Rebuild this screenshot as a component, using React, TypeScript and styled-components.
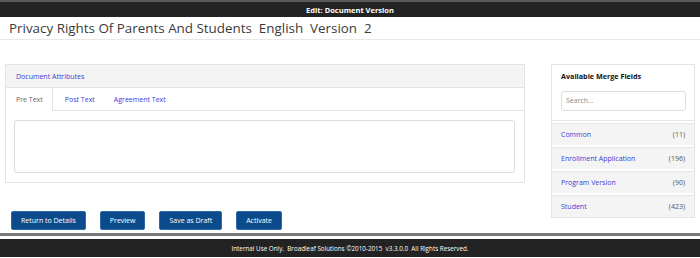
import React from 'react'
import styled, { createGlobalStyle } from 'styled-components'

interface MergeField {
  name: string,
  count: number,
}

interface TabProps {
  active?: boolean
}

const GlobalStyle = createGlobalStyle`
  body {
    margin: 0;
    background: #ffffff;
    font-family: 'Open Sans', 'Noto Sans', sans-serif;
    color: #333333;
  }
`

const TopBar = styled.div`
  height: 15px;
  border-top: 2px solid #5a5a5a;
  background: #232323;
  color: #ffffff;
  font-size: 7.5px;
  font-weight: 700;
  display: flex;
  align-items: center;
  justify-content: center;
`

const TitleRow = styled.div`
  height: 22px;
  padding: 0 9px;
  display: flex;
  align-items: center;
  border-bottom: 1px solid #e8e8e8;
  font-size: 13.4px;
  color: #3a3a3a;
`

const Main = styled.div`
  display: flex;
  align-items: flex-start;
  justify-content: space-between;
  padding: 24px 5px 3px 5px;
`

const LeftColumn = styled.div`
  width: 520px;
  display: flex;
  flex-direction: column;
`

const Panel = styled.div`
  border: 1px solid #e4e4e4;
  background: #ffffff;
`

const PanelHeader = styled.div`
  height: 22px;
  padding-left: 10px;
  display: flex;
  align-items: center;
  background: #f4f4f4;
  border-bottom: 1px solid #e4e4e4;
  font-size: 7px;
  color: #3b3bd6;
`

const Tabs = styled.div`
  height: 22px;
  display: flex;
  border-bottom: 1px solid #e4e4e4;
`

const Tab = styled.div<TabProps>`
  padding: 0 9px 0 10px;
  display: flex;
  align-items: center;
  font-size: 7px;
  color: ${props => props.active ? '#666666' : '#3b3bd6'};
  background: #ffffff;
  border-right: ${props => props.active ? '1px solid #e4e4e4' : 'none'};
  margin-bottom: ${props => props.active ? '-1px' : '0'};
  margin-right: ${props => props.active ? '2px' : '0'};
`

const TabBody = styled.div`
  padding: 9px 9px 9px 8px;
`

const TextBox = styled.textarea`
  display: block;
  box-sizing: border-box;
  width: 100%;
  height: 53px;
  border: 1px solid #dcdcdc;
  border-radius: 3px;
  resize: none;
  outline: none;
`

const ButtonRow = styled.div`
  display: flex;
  gap: 14px;
  margin: 28px 0 0 6px;
`

const Button = styled.button`
  height: 19px;
  padding: 0 9px;
  background: #0b4b8c;
  border: 1px solid #2c6aa8;
  border-radius: 2px;
  color: #ffffff;
  font-family: 'Open Sans', 'Noto Sans', sans-serif;
  font-size: 7px;
`

const SidePanel = styled.div`
  width: 144px;
  box-sizing: border-box;
  border: 1px solid #e4e4e4;
`

const SideHeader = styled.div`
  padding: 6px 8px 9px 9px;
  border-bottom: 1px solid #e4e4e4;
`

const SideTitle = styled.div`
  font-size: 7.2px;
  font-weight: 700;
  color: #111111;
  margin-bottom: 5px;
`

const SearchInput = styled.input`
  box-sizing: border-box;
  width: 125px;
  height: 20px;
  border: 1px solid #dedede;
  border-radius: 3px;
  padding: 0 4px;
  font-family: 'Open Sans', 'Noto Sans', sans-serif;
  font-size: 7px;
  outline: none;
  &::placeholder {
    color: #8a8a8a;
  }
`

const FieldItem = styled.div`
  height: 21px;
  margin-top: 2px;
  padding: 0 9px;
  display: flex;
  align-items: center;
  justify-content: space-between;
  background: #f4f4f4;
  border-top: 1px solid #e6e6e6;
  font-size: 7px;
`

const FieldName = styled.span`
  color: #3b3bd6;
`

const FieldCount = styled.span`
  color: #555555;
`

const Footer = styled.div`
  border-top: 3px solid #7a7a7a;
  padding-top: 3px;
`

const FooterBar = styled.div`
  height: 18px;
  background: #232323;
  color: #ffffff;
  font-size: 6.3px;
  display: flex;
  align-items: center;
  justify-content: center;
  white-space: pre;
`

const mergeFields: MergeField[] = [
  { name: 'Common', count: 11 },
  { name: 'Enrollment Application', count: 196 },
  { name: 'Program Version', count: 90 },
  { name: 'Student', count: 423 },
]

const App: React.FC = () => {
  return (
    <>
      <GlobalStyle />
      <TopBar>Edit: Document Version</TopBar>
      <TitleRow>Privacy Rights Of Parents And Students&nbsp; English&nbsp; Version&nbsp; 2</TitleRow>

      <Main>
        <LeftColumn>
          <Panel>
            <PanelHeader>Document Attributes</PanelHeader>
            <Tabs>
              <Tab active>Pre Text</Tab>
              <Tab>Post Text</Tab>
              <Tab>Agreement Text</Tab>
            </Tabs>
            <TabBody>
              <TextBox />
            </TabBody>
          </Panel>

          <ButtonRow>
            <Button>Return to Details</Button>
            <Button>Preview</Button>
            <Button>Save as Draft</Button>
            <Button>Activate</Button>
          </ButtonRow>
        </LeftColumn>

        <SidePanel>
          <SideHeader>
            <SideTitle>Available Merge Fields</SideTitle>
            <SearchInput placeholder="Search..." />
          </SideHeader>
          {mergeFields.map((field: MergeField) => (
            <FieldItem key={field.name}>
              <FieldName>{field.name}</FieldName>
              <FieldCount>({field.count})</FieldCount>
            </FieldItem>
          ))}
        </SidePanel>
      </Main>

      <Footer>
        <FooterBar>Internal Use Only.  Broadleaf Solutions ©2010-2015  v3.3.0.0  All Rights Reserved.</FooterBar>
      </Footer>
    </>
  )
}

export default App
